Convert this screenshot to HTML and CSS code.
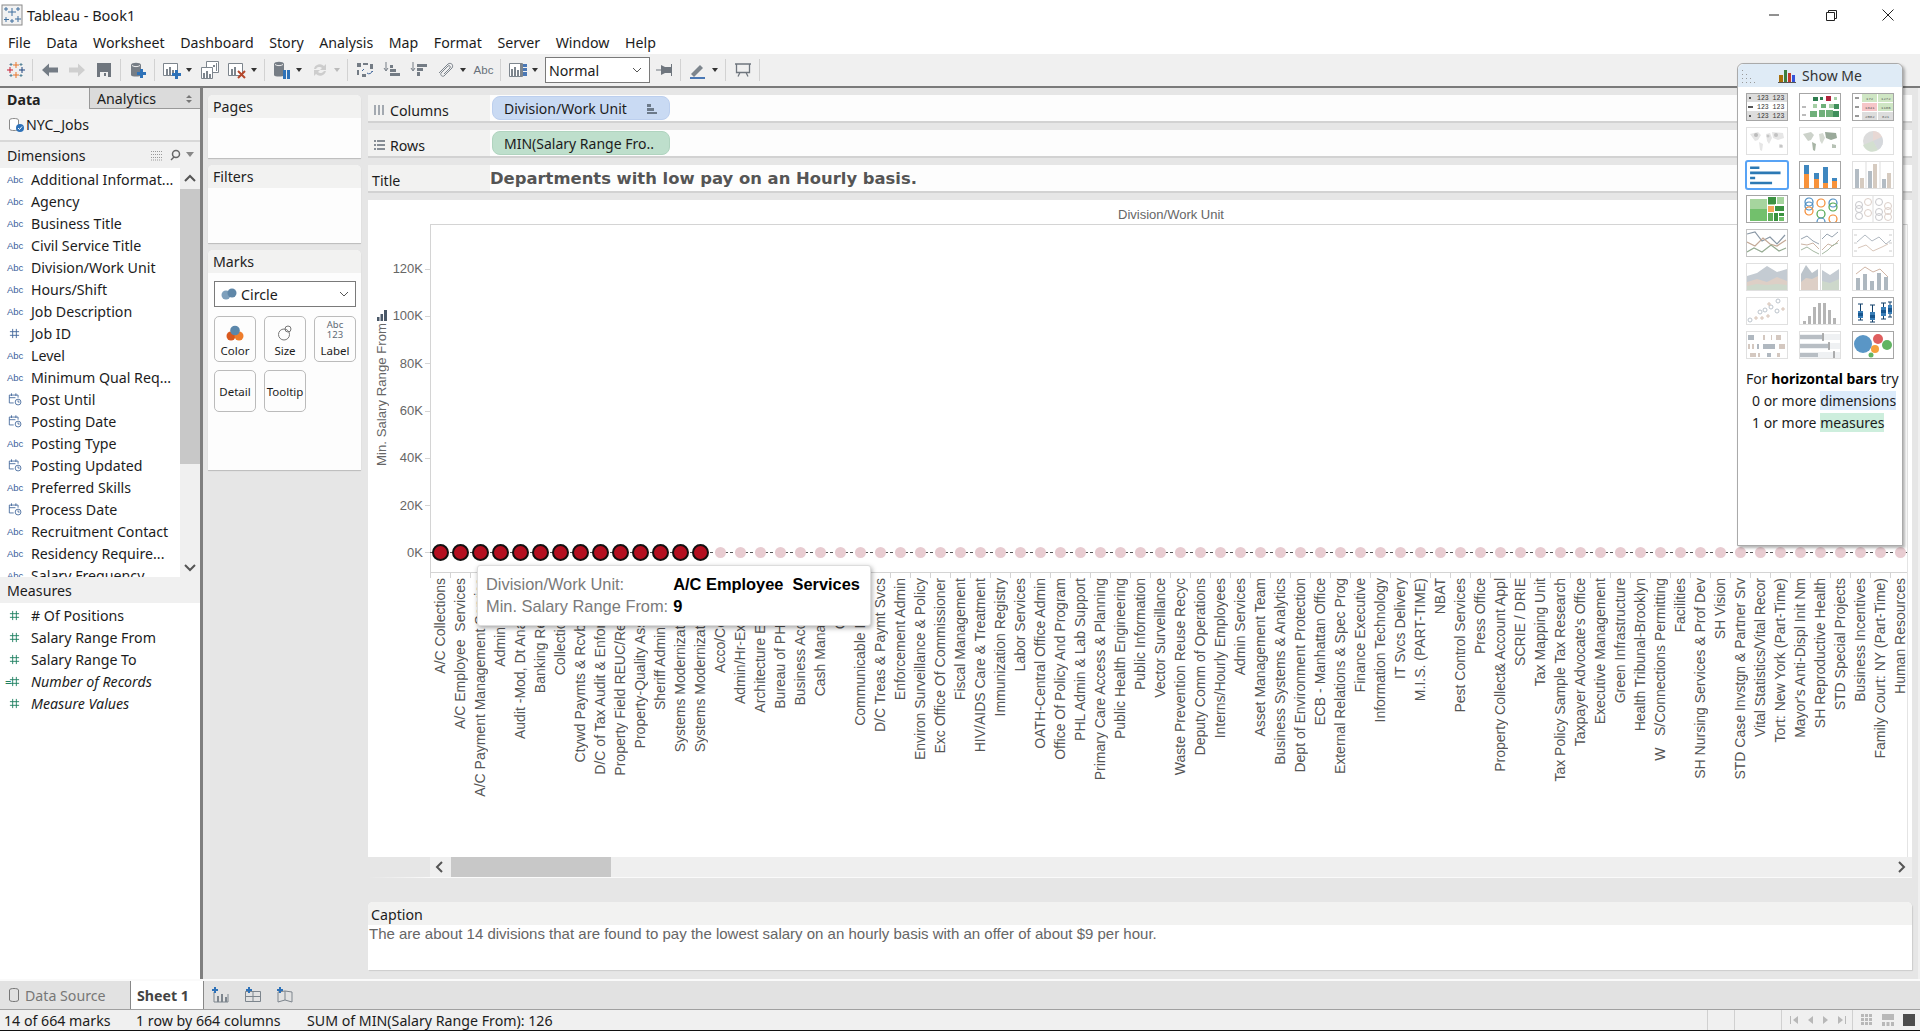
FILE: index.html
```html
<!DOCTYPE html>
<html lang="en">
<head>
    <meta charset="UTF-8">
    <title>Tableau - Book1</title>
    <link rel="stylesheet" href="styles.css">
</head>
<body>

<svg class="defs" width="0" height="0">
    <symbol id="i-caret" viewBox="0 0 14 14"><path d="M4 5h6L7 9z" fill="#333"/></symbol>
    <symbol id="i-caret-off" viewBox="0 0 14 14"><path d="M4 5h6L7 9z" fill="#bbb"/></symbol>
    <symbol id="i-date" viewBox="0 0 16 16"><g fill="none" stroke="#44689c"><path d="M1.500 3.500h10v3M1.500 3.500v9h5M4 1.500v3M9 1.500v3M1.500 6.500h7"/><circle cx="11.500" cy="11.500" r="3.300"/><path d="M11.500 9.500v2h1.800"/></g></symbol>
    <symbol id="i-hash-blue" viewBox="0 0 12 12"><path d="M4 1v10M8 1v10M1 4h10M1 8h10" stroke="#44689c" fill="none"/></symbol>
    <symbol id="i-hash" viewBox="0 0 12 12"><path d="M4 1v10M8 1v10M1 4h10M1 8h10" stroke="#1f8060" fill="none"/></symbol>
</svg>

<div class="app">

    <div class="titlebar">
        <svg class="app-icon" width="22" height="22" viewBox="0 0 22 22"><rect x="1" y="1" width="20" height="20" fill="#f2f2f2" stroke="#8a8a8a"/><path d="M11 4v8M7 8h8M5 3v4M3 5h4M17 3v4M15 5h4M5 13v5M3 15.500h5M17 12v6M14 15h6M11 15v4M9 17h4" stroke="#3f6f9e" fill="none"/></svg>
        <span class="app-name">Tableau - Book1</span>
        <div class="window-btns">
            <svg width="14" height="14" viewBox="0 0 14 14"><path d="M2 7h10" stroke="#222"/></svg>
            <svg width="14" height="14" viewBox="0 0 14 14"><path d="M2.500 4.500h8v8h-8zM4.500 4.500v-2h8v8h-2" fill="none" stroke="#222"/></svg>
            <svg width="14" height="14" viewBox="0 0 14 14"><path d="M1.500 1.500l11 11M12.500 1.500l-11 11" stroke="#222"/></svg>
        </div>
    </div>

    <div class="menubar">
        <span>File</span><span>Data</span><span>Worksheet</span><span>Dashboard</span><span>Story</span><span>Analysis</span><span>Map</span><span>Format</span><span>Server</span><span>Window</span><span>Help</span>
    </div>

    <div class="toolbar">
        <span class="tool"><svg width="20" height="20" viewBox="0 0 20 20"><path d="M10 2v6M7 5h6M10 12v6M7 15h6" stroke="#e8762c" fill="none"/><path d="M4 7v6M1 10h6" stroke="#c72035" fill="none"/><path d="M16 7v6M13 10h6" stroke="#1f457e" fill="none"/><path d="M5 3v3M3.500 4.500h3M15 3v3M13.500 4.500h3" stroke="#5b879b" fill="none"/><path d="M5 14v3M3.500 15.500h3M15 14v3M13.500 15.500h3" stroke="#59879b" fill="none"/></svg></span>
        <span class="sep"></span>
        <span class="tool"><svg width="18" height="18" viewBox="0 0 18 18"><path d="M1 9l7-6.500v4h9v5H8v4z" fill="#747c85"/></svg></span>
        <span class="tool"><svg width="18" height="18" viewBox="0 0 18 18"><path d="M17 9l-7-6.500v4H1v5h9v4z" fill="#cfcfcf"/></svg></span>
        <span class="tool"><svg width="18" height="18" viewBox="0 0 18 18"><path d="M2 2h14v14H2z" fill="#6f767e"/><path d="M5 11h8v5H5z" fill="#f0f0f0"/><path d="M9 12h2v3H9z" fill="#6f767e"/></svg></span>
        <span class="sep"></span>
        <span class="tool"><svg width="20" height="20" viewBox="0 0 20 20"><path d="M3 5c0-3 10-3 10 0v10c0 2-10 2-10 0z" fill="#767d85"/><path d="M4 5.500c2 1.500 6 1.500 8 0" stroke="#eee" fill="none"/><path d="M12 9h3v3h3v3h-3v3h-3v-3H9v-3h3z" fill="#2f72b8"/></svg></span>
        <span class="sep"></span>
        <span class="tool"><svg width="20" height="20" viewBox="0 0 20 20"><path d="M1.500 3.500h14v12h-14z" fill="#fff" stroke="#7d858d"/><path d="M4 9h2v6H4zM7 7h2v8H7zM10 10h2v5h-2z" fill="#7d858d"/><path d="M13 10h3v3h3v3h-3v3h-3v-3h-3v-3h3z" fill="#2f72b8"/></svg></span>
        <svg class="caret" viewBox="0 0 14 14"><use href="#i-caret"/></svg>
        <span class="tool"><svg width="20" height="20" viewBox="0 0 20 20"><path d="M6.500 1.500h12v11h-12z" fill="#fff" stroke="#7d858d"/><path d="M1.500 7.500h11v11h-11z" fill="#fff" stroke="#7d858d"/><path d="M3 13h2v5H3zM6 11h2v7H6zM9 14h2v4H9zM13 5h2v2h-2zM16 3h1v8h-1z" fill="#7d858d"/></svg></span>
        <span class="tool"><svg width="20" height="20" viewBox="0 0 20 20"><path d="M1.500 3.500h14v12h-14z" fill="#fff" stroke="#7d858d"/><path d="M4 9h2v6H4zM7 7h2v8H7z" fill="#7d858d"/><path d="M11 11l7 7M18 11l-7 7" stroke="#b5482c" stroke-width="2"/></svg></span>
        <svg class="caret" viewBox="0 0 14 14"><use href="#i-caret"/></svg>
        <span class="sep"></span>
        <span class="tool"><svg width="20" height="20" viewBox="0 0 20 20"><path d="M2 4c0-3 10-3 10 0v11c0 2-10 2-10 0z" fill="#767d85"/><path d="M3 4.500c2 1.500 6 1.500 8 0" stroke="#eee" fill="none"/><path d="M11 10h3v9h-3zM15 10h3v9h-3z" fill="#2f72b8"/></svg></span>
        <svg class="caret" viewBox="0 0 14 14"><use href="#i-caret"/></svg>
        <span class="tool"><svg width="20" height="20" viewBox="0 0 20 20"><path d="M4 9a6 6 0 0 1 10-3l2-2v6h-6l2-2a4 4 0 0 0-6 1zM16 11a6 6 0 0 1-10 3l-2 2v-6h6l-2 2a4 4 0 0 0 6-1z" fill="#cdcdcd"/></svg></span>
        <svg class="caret" viewBox="0 0 14 14"><use href="#i-caret-off"/></svg>
        <span class="sep"></span>
        <span class="tool"><svg width="18" height="18" viewBox="0 0 18 18"><path d="M1 2h4v4H1zM7 2h5v2H7zM1 9h2v5H1zM6 13h4v3H6zM14 3h3v5h-3z" fill="#747c85"/><path d="M11 12a3 3 0 0 0 5-2l1 1M8 8l-2 2" stroke="#44689c" fill="none"/></svg></span>
        <span class="tool"><svg width="18" height="18" viewBox="0 0 18 18"><path d="M3 1v8M1 7l2 3 2-3" stroke="#747c85" fill="none"/><path d="M7 4h3v3H7zM7 8h6v3H7zM7 12h10v3H7z" fill="#747c85"/></svg></span>
        <span class="tool"><svg width="18" height="18" viewBox="0 0 18 18"><path d="M3 1v8M1 7l2 3 2-3" stroke="#747c85" fill="none"/><path d="M7 3h10v3H7zM7 7h6v3H7zM7 11h3v4H7z" fill="#747c85"/></svg></span>
        <span class="tool"><svg width="18" height="18" viewBox="0 0 18 18"><path d="M2 12l9-9c3-2 6 1 4 4l-8 8c-2 1-4-1-3-3l7-7c1-1 3 0 2 2l-6 6" fill="none" stroke="#7d858d"/></svg></span>
        <svg class="caret" viewBox="0 0 14 14"><use href="#i-caret"/></svg>
        <span class="tool tool-abc">Abc</span>
        <span class="sep"></span>
        <span class="tool"><svg width="20" height="18" viewBox="0 0 20 18"><path d="M1.500 2.500h13v13h-13z" fill="#fff" stroke="#7d858d"/><path d="M3 8h2v7H3zM6 6h2v9H6zM9 9h2v6H9zM12 3h2v12h-2z" fill="#7d858d"/><path d="M15 3h4v3h-4zM15 7h4v3h-4zM15 11h4v4h-4z" fill="#4a78b5"/></svg></span>
        <svg class="caret" viewBox="0 0 14 14"><use href="#i-caret"/></svg>
        <div class="fit-select"><span>Normal</span><svg width="12" height="12" viewBox="0 0 12 12"><path d="M2 4l4 4 4-4" fill="none" stroke="#555"/></svg></div>
        <span class="tool"><svg width="18" height="14" viewBox="0 0 18 14"><path d="M1 7h6M16.500 1v12" stroke="#6f767e"/><path d="M6 2l4 2h6v6h-6l-4 2z" fill="#6f767e"/></svg></span>
        <span class="sep"></span>
        <span class="tool"><svg width="18" height="18" viewBox="0 0 18 18"><path d="M2 13l9-9 3 3-9 9z" fill="#7d858d"/><path d="M1 17h15" stroke="#4a78b5" stroke-width="2"/></svg></span>
        <svg class="caret" viewBox="0 0 14 14"><use href="#i-caret"/></svg>
        <span class="sep"></span>
        <span class="tool"><svg width="18" height="18" viewBox="0 0 18 18"><path d="M1 3h16M2.500 3.500v8h13v-8M6 11.500l-2 4M12 11.500l2 4" fill="none" stroke="#6f767e" stroke-width="1.300"/></svg></span>
        <span class="sep"></span>
    </div>

    <div class="workspace">

        <div class="left">
            <div class="tabs">
                <span class="tab tab-on">Data</span>
                <span class="tab tab-off">Analytics<svg width="8" height="10" viewBox="0 0 8 10"><path d="M1 4l3-3 3 3zM1 6l3 3 3-3z" fill="#777"/></svg></span>
            </div>
            <div class="source">
                <svg width="18" height="16" viewBox="0 0 18 16"><path d="M1.500 3c0-2 9-2 9 0v9c0 2-9 2-9 0z" fill="#fff" stroke="#8a8a8a"/><circle cx="12" cy="11" r="4" fill="#2f72b8"/><path d="M10 11l1.500 1.500 2.500-3" fill="none" stroke="#fff"/></svg>
                <span>NYC_Jobs</span>
            </div>
            <div class="list-head">
                <span>Dimensions</span>
                <svg width="46" height="12" viewBox="0 0 46 12"><path d="M1 2.500h12M1 5.500h12M1 8.500h12M1 11h12" stroke="#999" stroke-dasharray="1 1"/><circle cx="26" cy="5" r="3.500" fill="none" stroke="#666" stroke-width="1.500"/><path d="M24 8l-3 3" stroke="#666" stroke-width="1.500"/><path d="M36 3h8l-4 5z" fill="#888"/></svg>
            </div>
            <div class="dims">
                <div class="fields">
                    <div class="field"><span class="abc">Abc</span>Additional Informat...</div>
                    <div class="field"><span class="abc">Abc</span>Agency</div>
                    <div class="field"><span class="abc">Abc</span>Business Title</div>
                    <div class="field"><span class="abc">Abc</span>Civil Service Title</div>
                    <div class="field"><span class="abc">Abc</span>Division/Work Unit</div>
                    <div class="field"><span class="abc">Abc</span>Hours/Shift</div>
                    <div class="field"><span class="abc">Abc</span>Job Description</div>
                    <div class="field"><svg class="ftype" viewBox="0 0 12 12"><use href="#i-hash-blue"/></svg>Job ID</div>
                    <div class="field"><span class="abc">Abc</span>Level</div>
                    <div class="field"><span class="abc">Abc</span>Minimum Qual Req...</div>
                    <div class="field"><svg class="ftype ftype-date" viewBox="0 0 16 16"><use href="#i-date"/></svg>Post Until</div>
                    <div class="field"><svg class="ftype ftype-date" viewBox="0 0 16 16"><use href="#i-date"/></svg>Posting Date</div>
                    <div class="field"><span class="abc">Abc</span>Posting Type</div>
                    <div class="field"><svg class="ftype ftype-date" viewBox="0 0 16 16"><use href="#i-date"/></svg>Posting Updated</div>
                    <div class="field"><span class="abc">Abc</span>Preferred Skills</div>
                    <div class="field"><svg class="ftype ftype-date" viewBox="0 0 16 16"><use href="#i-date"/></svg>Process Date</div>
                    <div class="field"><span class="abc">Abc</span>Recruitment Contact</div>
                    <div class="field"><span class="abc">Abc</span>Residency Require...</div>
                    <div class="field"><span class="abc">Abc</span>Salary Frequency</div>
                </div>
                <div class="vscroll">
                    <svg width="14" height="21" viewBox="0 0 14 21"><path d="M2 13l5-5 5 5" fill="none" stroke="#555" stroke-width="2"/></svg>
                    <div class="vthumb"></div>
                    <svg class="vdown" width="14" height="14" viewBox="0 0 14 14"><path d="M2 5l5 5 5-5" fill="none" stroke="#555" stroke-width="2"/></svg>
                </div>
            </div>
            <div class="list-head list-head-m">Measures</div>
            <div class="measures">
                <div class="field"><svg class="ftype" viewBox="0 0 12 12"><use href="#i-hash"/></svg># Of Positions</div>
                <div class="field"><svg class="ftype" viewBox="0 0 12 12"><use href="#i-hash"/></svg>Salary Range From</div>
                <div class="field"><svg class="ftype" viewBox="0 0 12 12"><use href="#i-hash"/></svg>Salary Range To</div>
                <div class="field field-calc"><span class="calc">=</span><svg class="ftype" viewBox="0 0 12 12"><use href="#i-hash"/></svg>Number of Records</div>
                <div class="field field-calc"><svg class="ftype" viewBox="0 0 12 12"><use href="#i-hash"/></svg>Measure Values</div>
            </div>
        </div>

        <div class="cards">
            <div class="card card-pages"><div class="card-head">Pages</div></div>
            <div class="card card-filters"><div class="card-head">Filters</div></div>
            <div class="card card-marks">
                <div class="card-head">Marks</div>
                <div class="mark-type">
                    <svg width="16" height="12" viewBox="0 0 16 12"><circle cx="5" cy="7" r="4.500" fill="#7ea0bc"/><circle cx="11" cy="5" r="4.500" fill="#5f87a8"/></svg>
                    <span>Circle</span>
                    <svg class="chev" width="12" height="12" viewBox="0 0 12 12"><path d="M2 4l4 4 4-4" fill="none" stroke="#555"/></svg>
                </div>
                <div class="mark-btns">
                    <div class="mark-btn"><svg width="18" height="16" viewBox="0 0 18 16"><circle cx="5" cy="11" r="4.500" fill="#d9591f"/><circle cx="13" cy="11" r="4.500" fill="#ee7d2c"/><circle cx="9" cy="5.500" r="4.800" fill="#5b87ab"/></svg><span>Color</span></div>
                    <div class="mark-btn"><svg width="16" height="16" viewBox="0 0 16 16"><circle cx="7" cy="9.500" r="5.500" fill="none" stroke="#777"/><circle cx="11" cy="4" r="3" fill="none" stroke="#777"/></svg><span>Size</span></div>
                    <div class="mark-btn"><span class="abc123">Abc<br>123</span><span>Label</span></div>
                    <div class="mark-btn mark-btn-plain"><span>Detail</span></div>
                    <div class="mark-btn mark-btn-plain"><span>Tooltip</span></div>
                </div>
            </div>
        </div>

        <div class="main">
            <div class="shelf">
                <div class="shelf-label"><svg width="12" height="12" viewBox="0 0 12 12"><path d="M1 1h2v10H1zM5 1h2v10H5zM9 1h2v10H9z" fill="#a3a9b0"/></svg>Columns</div>
                <div class="pill pill-dim">Division/Work Unit<svg width="12" height="12" viewBox="0 0 12 12"><path d="M1 1h4v3H1zM1 5h7v3H1zM1 9h10v2H1z" fill="#6c7a8a"/></svg></div>
            </div>
            <div class="shelf">
                <div class="shelf-label"><svg width="12" height="12" viewBox="0 0 12 12"><path d="M1 1h2v2H1zM4 1h8v2H4zM1 5h2v2H1zM4 5h8v2H4zM1 9h2v2H1zM4 9h8v2H4z" fill="#868d95"/></svg>Rows</div>
                <div class="pill pill-mea">MIN(Salary Range Fro..</div>
            </div>
            <div class="shelf">
                <div class="shelf-label shelf-label-title">Title</div>
                <div class="sheet-title">Departments with low pay on an Hourly basis.</div>
            </div>

            <div class="view">
                <div class="view-head">Division/Work Unit</div>
                <div class="chart">
                    <div class="yaxis">
                        <div class="ytitle">
                            <svg width="12" height="11" viewBox="0 0 12 11"><path d="M1 7h2.500v4H1zM4.500 4H7v7H4.500zM8 0h3v11H8z" fill="#4a5868"/></svg>
                            <span>Min. Salary Range From</span>
                        </div>
                        <div class="yticks">
                            <div class="ytick">120K</div>
                            <div class="ytick">100K</div>
                            <div class="ytick">80K</div>
                            <div class="ytick">60K</div>
                            <div class="ytick">40K</div>
                            <div class="ytick">20K</div>
                            <div class="ytick">0K</div>
                        </div>
                    </div>
                    <div class="plot">
                        <div class="marks">
                            <i class="m on"></i><i class="m on"></i><i class="m on"></i><i class="m on"></i><i class="m on"></i><i class="m on"></i><i class="m on"></i><i class="m on"></i><i class="m on"></i><i class="m on"></i><i class="m on"></i><i class="m on"></i><i class="m on"></i><i class="m on"></i>
                            <i class="m"></i><i class="m"></i><i class="m"></i><i class="m"></i><i class="m"></i><i class="m"></i><i class="m"></i><i class="m"></i><i class="m"></i><i class="m"></i><i class="m"></i><i class="m"></i><i class="m"></i><i class="m"></i><i class="m"></i><i class="m"></i>
                            <i class="m"></i><i class="m"></i><i class="m"></i><i class="m"></i><i class="m"></i><i class="m"></i><i class="m"></i><i class="m"></i><i class="m"></i><i class="m"></i><i class="m"></i><i class="m"></i><i class="m"></i><i class="m"></i><i class="m"></i><i class="m"></i>
                            <i class="m"></i><i class="m"></i><i class="m"></i><i class="m"></i><i class="m"></i><i class="m"></i><i class="m"></i><i class="m"></i><i class="m"></i><i class="m"></i><i class="m"></i><i class="m"></i><i class="m"></i><i class="m"></i><i class="m"></i><i class="m"></i>
                            <i class="m"></i><i class="m"></i><i class="m"></i><i class="m"></i><i class="m"></i><i class="m"></i><i class="m"></i><i class="m"></i><i class="m"></i><i class="m"></i><i class="m"></i><i class="m"></i>
                        </div>
                    </div>
                </div>
                <div class="xticks"></div>
                <div class="cats">
                    <span>A/C Collections</span><span>A/C Employee  Services</span><span>A/C Payment Management Service</span><span>Administration</span><span>Audit -Mod, Dt Analysis IT</span><span>Banking Reconcils</span><span>Collections Unit</span><span>Ctywd Paymts &amp; Rcvbls Units</span><span>D/C of Tax Audit &amp; Enforcement</span><span>Property Field REUC/Revaluate</span><span>Property-Quality Assurance</span><span>Sheriff Administration</span><span>Systems Modernization Unit</span><span>Systems Modernization Unit</span><span>Acco/Contracts</span><span>Admin/Hr-Exempted</span><span>Architecture Engineer</span><span>Bureau of PH Library</span><span>Business Access Ctr</span><span>Cash Management</span><span>Chemist</span><span>Communicable Disease</span><span>D/C Treas &amp; Paymt Svcs</span><span>Enforcement Admin</span><span>Environ Surveillance &amp; Policy</span><span>Exc Office Of Commissioner</span><span>Fiscal Management</span><span>HIV/AIDS Care &amp; Treatment</span><span>Immunization Registry</span><span>Labor Services</span><span>OATH-Central Office Admin</span><span>Office Of Policy And Program</span><span>PHL Admin &amp; Lab Support</span><span>Primary Care Access &amp; Planning</span><span>Public Health Engineering</span><span>Public Information</span><span>Vector Surveillance</span><span>Waste Prevention Reuse Recyc</span><span>Deputy Comm of Operations</span><span>Interns/Hourly Employees</span><span>Admin Services</span><span>Asset Management Team</span><span>Business Systems &amp; Analytics</span><span>Dept of Environment Protection</span><span>ECB - Manhattan Office</span><span>External Relations &amp; Spec Prog</span><span>Finance Executive</span><span>Information Technology</span><span>IT Svcs Delivery</span><span>M.I.S. (PART-TIME)</span><span>NBAT</span><span>Pest Control Services</span><span>Press Office</span><span>Property Collect&amp; Account Appl</span><span>SCRIE / DRIE</span><span>Tax Mapping Unit</span><span>Tax Policy Sample Tax Research</span><span>Taxpayer Advocate's Office</span><span>Executive Management</span><span>Green Infrastructure</span><span>Health Tribunal-Brooklyn</span><span>W   S/Connections Permitting</span><span>Facilities</span><span>SH Nursing Services &amp; Prof Dev</span><span>SH Vision</span><span>STD Case Invstgn &amp; Partner Srv</span><span>Vital Statistics/Vital Recor</span><span>Tort: New York (Part-Time)</span><span>Mayor's Anti-Displ Init Nm</span><span>SH Reproductive Health</span><span>STD Special Projects</span><span>Business Incentives</span><span>Family Court: NY (Part-Time)</span><span>Human Resources</span>
                </div>
                <div class="hscroll">
                    <svg width="10" height="14" viewBox="0 0 10 14"><path d="M7 2L2 7l5 5" fill="none" stroke="#555" stroke-width="2"/></svg>
                    <div class="hthumb"></div>
                    <svg class="hnext" width="10" height="14" viewBox="0 0 10 14"><path d="M3 2l5 5-5 5" fill="none" stroke="#555" stroke-width="2"/></svg>
                </div>
                <div class="tooltip">
                    <span class="tip-k">Division/Work Unit:</span><span class="tip-v">A/C Employee  Services</span>
                    <span class="tip-k">Min. Salary Range From:</span><span class="tip-v">9</span>
                </div>
            </div>

            <div class="caption">
                <div class="caption-head">Caption</div>
                <div class="caption-text">The are about 14 divisions that are found to pay the lowest salary on an hourly basis with an offer of about $9 per hour.</div>
            </div>
        </div>
    </div>

    <div class="tabbar">
        <span class="ds-tab"><svg width="12" height="16" viewBox="0 0 12 16"><path d="M1.500 3c0-2 9-2 9 0v10c0 2-9 2-9 0z" fill="none" stroke="#777"/></svg>Data Source</span>
        <span class="sheet-tab">Sheet 1</span>
        <div class="new-tabs">
            <svg width="18" height="16" viewBox="0 0 18 16"><path d="M2 5v10h14V7" fill="none" stroke="#7d858d"/><path d="M5 9h2v6H5zM9 7h2v8H9zM13 10h2v5h-2z" fill="#7d858d"/><path d="M3 0v6M0 3h6" stroke="#2f72b8" stroke-width="2"/></svg>
            <svg width="18" height="16" viewBox="0 0 18 16"><path d="M1.500 4.500h15v10h-15zM1.500 9.500h15M9 4.500v10" fill="none" stroke="#7d858d"/><path d="M5 0v6M2 3h6" stroke="#2f72b8" stroke-width="2"/></svg>
            <svg width="18" height="16" viewBox="0 0 18 16"><path d="M2 5v10l7-2 7 2V5l-7-1zM9 4v9" fill="none" stroke="#7d858d"/><path d="M4 0v6M1 3h6" stroke="#2f72b8" stroke-width="2"/></svg>
        </div>
    </div>

    <div class="statusbar">
        <span class="st-marks">14 of 664 marks</span>
        <span class="st-dims">1 row by 664 columns</span>
        <span class="st-sum">SUM of MIN(Salary Range From): 126</span>
        <div class="st-right">
            <span class="st-cell"></span>
            <span class="st-cell st-cell-wide"></span>
            <div class="st-nav">
                <svg width="10" height="10" viewBox="0 0 10 10"><path d="M1 1h1v8H1zM9 1v8L4 5z" fill="#b8b8b8"/></svg>
                <svg width="10" height="10" viewBox="0 0 10 10"><path d="M8 1v8L3 5z" fill="#b8b8b8"/></svg>
                <svg width="10" height="10" viewBox="0 0 10 10"><path d="M2 1v8l5-4z" fill="#b8b8b8"/></svg>
                <svg width="10" height="10" viewBox="0 0 10 10"><path d="M8 1h1v8H8zM1 1v8l5-4z" fill="#b8b8b8"/></svg>
            </div>
            <div class="st-views">
                <svg width="12" height="12" viewBox="0 0 12 12"><path d="M0 0h3v3H0zM4 0h3v3H4zM8 0h3v3H8zM0 4h3v3H0zM4 4h3v3H4zM8 4h3v3H8zM0 8h3v3H0zM4 8h3v3H4zM8 8h3v3H8z" fill="#b8b8b8"/></svg>
                <svg width="12" height="12" viewBox="0 0 12 12"><path d="M0 0h12v6H0zM0 8h3v4H0zM4.500 8h3v4h-3zM9 8h3v4H9z" fill="#b8b8b8"/></svg>
                <svg width="12" height="12" viewBox="0 0 12 12"><path d="M0 0h12v12H0z" fill="#4c4c4c"/></svg>
            </div>
        </div>
    </div>

    <!-- floating show me panel -->
    <div class="showme">
        <div class="showme-head">
            <svg class="showme-grip" width="16" height="16" viewBox="0 0 16 16"><path d="M1 1h1v1H1zM1 5h1v1H1zM5 5h1v1H5zM1 9h1v1H1zM5 9h1v1H5zM9 9h1v1H9zM1 13h1v1H1zM5 13h1v1H5zM9 13h1v1H9zM13 13h1v1h-1z" fill="#999"/></svg>
            <svg width="18" height="14" viewBox="0 0 18 14"><path d="M1 6h4v7H1z" fill="#a8700a"/><path d="M6 1h3v12H6z" fill="#3f7f3f"/><path d="M10 4h3v9h-3z" fill="#c0392b"/><path d="M14 6h3v7h-3z" fill="#3552d8"/><path d="M0 13.500h18" stroke="#555"/></svg>
            <span>Show Me</span>
        </div>
        <div class="thumbs">
            <svg class="thumb" viewBox="0 0 40 26"><path d="M0 0h40v8H0zM0 17h40v9H0z" fill="#ddd"/><path d="M2 3h2v2H2zM1 12h5v2H1zM2 21h2v2H2z" fill="#555"/><text class="tx" x="10" y="6">123 123</text><text class="tx" x="10" y="15">123 123</text><text class="tx" x="10" y="24">123 123</text></svg>
            <svg class="thumb" viewBox="0 0 40 26"><path d="M13 3h5v4h-5zM20 3h3v3h-3z" fill="#2e7d4f"/><path d="M26 2h5v5h-5z" fill="#b0243c"/><path d="M34 3h3v3h-3zM13 10h4v4h-4zM29 10h5v4h-5z" fill="#a6cfa6"/><path d="M21 10h5v4h-5zM26 16h7v7h-7z" fill="#6fb07a"/><path d="M34 10h5v5h-5zM33 17h6v6h-6z" fill="#3f8f5b"/><path d="M10 17h7v6h-7zM19 16h6v7h-6z" fill="#6fb07a"/><path d="M2 12h4v2H2zM2 20h4v2H2z" fill="#bbb"/></svg>
            <svg class="thumb" viewBox="0 0 40 26"><path d="M9 0h15v8H9zM25 0h15v8H25zM25 9h15v8H25z" fill="#cfe6c4"/><path d="M9 9h15v8H9z" fill="#f6c6c8"/><path d="M9 18h15v8H9zM25 18h15v8H25z" fill="#ddd"/><path d="M2 3h4v2H2zM2 12h4v2H2zM2 21h4v2H2z" fill="#999"/><text class="tx-s" x="13" y="6">172</text><text class="tx-s" x="28" y="6">1272</text><text class="tx-s" x="12" y="15">1841</text><text class="tx-s" x="28" y="15">1186</text><text class="tx-s" x="12" y="24">2082</text><text class="tx-s" x="29" y="24">821</text></svg>

            <svg class="thumb off" viewBox="0 0 40 26"><path d="M3 6l8-2 3 3-3 5-3 1zM12 14l4 2-1 7-2-1zM19 6l4-1 2 5-3 6-2-3zM25 4l11 1 1 5-6 2-5-2zM32 16l4 1 0 3-4 0z" fill="#e6e6e6"/><circle cx="9" cy="7" r="2" fill="#bbb"/><circle cx="21" cy="8" r="1.500" fill="#c6c6c6"/><circle cx="29" cy="7" r="2" fill="#c2c2c2"/><circle cx="34" cy="18" r="1.500" fill="#c6c6c6"/></svg>
            <svg class="thumb off" viewBox="0 0 40 26"><path d="M3 6l8-2 3 3-3 5-3 1z" fill="#ccd2ca"/><path d="M12 14l4 2-1 7-2-1z" fill="#a8b5a6"/><path d="M19 6l4-1 2 5-3 6-2-3z" fill="#d6dbd3"/><path d="M25 4l11 1 1 5-6 2-5-2z" fill="#9aa99a"/><path d="M32 16l4 1 0 3-4 0z" fill="#b7c2b5"/></svg>
            <svg class="thumb off" viewBox="0 0 40 26"><circle cx="20" cy="13" r="10" fill="#dcdcdc"/><path d="M20 13V3a10 10 0 0 1 9 6z" fill="#e8d8d4"/><path d="M20 13l9-4a10 10 0 0 1-4 13z" fill="#d5d8dc"/><path d="M20 13l5 9a10 10 0 0 1-15-5z" fill="#d3dfd0"/></svg>

            <div class="thumb-on"><svg viewBox="0 0 40 26"><path d="M0 3h11v3H0zM0 9h36v3H0zM0 15h6v3H0zM0 21h26v3H0z" fill="#2c79b4"/></svg></div>
            <svg class="thumb" viewBox="0 0 40 26"><path d="M4 3h5v12H4zM14 11h5v6h-5zM23 5h5v17h-5zM32 16h5v3h-5z" fill="#3f87bf"/><path d="M4 12h5v14H4zM14 17h5v9h-5zM23 21h5v5h-5zM32 19h5v7h-5z" fill="#f8923a"/></svg>
            <svg class="thumb off" viewBox="0 0 40 26"><path d="M2 7h4v19H2zM15 9h4v17h-4zM29 17h4v9h-4z" fill="#b3bcc4"/><path d="M7 16h4v10H7zM20 2h4v24h-4zM34 11h4v15h-4zM16 20h0" fill="#d6cbc0"/><path d="M13 0v26M27 0v26" stroke="#ddd"/></svg>

            <svg class="thumb" viewBox="0 0 40 26"><path d="M3 3h17v10H3zM21 3h7v6h-7z" fill="#a6d59e"/><path d="M21 1h8v7h-8z" fill="#3b9241"/><path d="M30 1h7v7h-7z" fill="#a6d59e"/><path d="M3 13h17v12H3z" fill="#72c06c"/><path d="M21 10h6v6h-6z" fill="#f5a85c"/><path d="M28 10h9v5h-9zM27 17h4v8h-4zM32 17h5v3h-5z" fill="#3b9241"/><path d="M21 17h5v8h-5z" fill="#5fae5a"/><path d="M32 21h5v4h-5z" fill="#72c06c"/></svg>
            <svg class="thumb" viewBox="0 0 40 26"><g fill="none" stroke-width="1.200"><circle cx="9" cy="6" r="4" stroke="#4b8cc2"/><circle cx="9" cy="10" r="4" stroke="#4b8cc2"/><circle cx="9" cy="15" r="4" stroke="#f48b34"/><circle cx="21" cy="7" r="4" stroke="#f48b34"/><circle cx="21" cy="18" r="4" stroke="#4da54c"/><circle cx="21" cy="26" r="4" stroke="#4b8cc2"/><circle cx="33" cy="7" r="4" stroke="#4b8cc2"/><circle cx="33" cy="11" r="4" stroke="#4da54c"/><circle cx="33" cy="23" r="4" stroke="#f48b34"/></g></svg>
            <svg class="thumb off" viewBox="0 0 40 26"><g fill="none" stroke="#c8c8cc"><circle cx="6" cy="9" r="3.500"/><circle cx="6" cy="13" r="3.500"/><circle cx="6" cy="20" r="3.500"/><circle cx="26" cy="6" r="3.500"/><circle cx="26" cy="16" r="3.500"/><circle cx="26" cy="21" r="3.500"/></g><g fill="none" stroke="#dccfc8"><circle cx="15" cy="6" r="3.500"/><circle cx="15" cy="17" r="3.500"/><circle cx="35" cy="10" r="3.500"/><circle cx="35" cy="15" r="3.500"/><circle cx="35" cy="21" r="3.500"/></g><path d="M20 0v26" stroke="#ddd"/></svg>

            <svg class="thumb mid" viewBox="0 0 40 26"><g fill="none" stroke-width="1.200"><path d="M0 4l8-2 7 9 8-4 7 7 8-9" stroke="#8a98a6"/><path d="M0 12l8 4 8-8 7 6 7 2 9-6" stroke="#c4a996"/><path d="M0 22l7-4 8 4 9-7 8 6 7-3" stroke="#95ab92"/></g></svg>
            <svg class="thumb off" viewBox="0 0 40 26"><g fill="none"><path d="M1 9l6-3 6 5 6 3" stroke="#98a4b0"/><path d="M1 14l6 1 6-2 6 6" stroke="#ccb5a5"/><path d="M1 20l6-3 6 4 6 3" stroke="#a5b8a2"/><path d="M22 9l5-5 5 3 6-5" stroke="#98a4b0"/><path d="M22 20l6-6 5 2 6-6" stroke="#ccb5a5"/><path d="M22 24l6-4 5-5 5-2" stroke="#a5b8a2"/><path d="M20.500 0v26" stroke="#ddd"/></g></svg>
            <svg class="thumb off" viewBox="0 0 40 26"><g fill="none"><path d="M4 12l8-7 7 6 7-4 7 7 5-4" stroke="#b3bac2"/><path d="M5 18l8-3 7 6 9-4 6-3" stroke="#d8c6ba"/><path d="M1 5h3M1 13h3M1 21h3M36 5h3M36 13h3M36 21h3" stroke="#ccc"/></g></svg>

            <svg class="thumb off" viewBox="0 0 40 26"><path d="M0 12l10-3 10-7 10 6 10-3v21H0z" fill="#c4cbd2"/><path d="M0 18l10-3 10 3 10-5 10 4v9H0z" fill="#ddcfc6"/><path d="M0 22l10-2 10 1 10-1 10 1v5H0z" fill="#cdd8cb"/></svg>
            <svg class="thumb off" viewBox="0 0 40 26"><path d="M1 10l5-9 6 8 6-4v21H1z" fill="#bcc4cb"/><path d="M1 18l5-4 6 1 6-3v14H1z" fill="#ddcfc6"/><path d="M22 6l8 5 9-6v21H22z" fill="#c4cbd2"/><path d="M22 17l8 2 9-4v11H22z" fill="#cdd8cb"/><path d="M20.500 0v26" stroke="#ddd"/></svg>
            <svg class="thumb off" viewBox="0 0 40 26"><path d="M3 14h4v12H3zM10 10h4v16h-4zM17 17h4v9h-4zM24 9h4v17h-4zM31 13h4v13h-4z" fill="#aeb8c0"/><path d="M3 10l9-7 8 5 7-3 8 8" fill="none" stroke="#d0b5a5"/></svg>

            <svg class="thumb off" viewBox="0 0 40 26"><g fill="none" stroke="#bcc4cc"><circle cx="3" cy="22" r="2"/><circle cx="13" cy="14" r="2"/><circle cx="18" cy="12" r="2"/><circle cx="24" cy="9" r="2"/><circle cx="30" cy="13" r="2"/><circle cx="31" cy="3" r="2"/></g><path d="M9 18v4M7 20h4M15 18v4M13 20h4M21 16v4M19 18h4M22 4v4M20 6h4M36 9v4M34 11h4" stroke="#d6c2b5"/></svg>
            <svg class="thumb off" viewBox="0 0 40 26"><path d="M3 23h3v3H3zM8 18h3v8H8zM13 9h3v17h-3zM18 5h3v21h-3zM23 5h3v21h-3zM28 12h3v14h-3zM33 20h3v6h-3z" fill="#b5b5b5"/></svg>
            <svg class="thumb" viewBox="0 0 40 26"><path d="M5 6h5M7.500 6v16M5 22h5M17 7h5M19.500 7v17M17 24h5M28 5h5M30.500 5v16M28 21h5M35 4h4M37 4v15M35 19h4" stroke="#12416b" fill="none"/><path d="M5 13h5v7H5zM17 14h5v8h-5zM28 9h5v9h-5zM35 7h4v9h-4z" fill="#3a7fb8"/><path d="M5 15h5v3H5zM17 17h5v3h-5zM28 12h5v3h-5zM35 10h4v4h-4z" fill="#17568f"/></svg>

            <svg class="thumb off" viewBox="0 0 40 26"><path d="M1 3h6v5H1zM16 3h2v5h-2zM24 3h1v5h-1zM29 3h5v5h-5zM1 12h2v5H1zM5 12h2v5H5zM10 12h2v5h-2zM16 12h12v5H16zM32 12h6v5h-6zM3 21h6v4H3zM11 21h2v4h-2zM20 21h4v4h-4zM30 21h3v4h-3z" fill="#d4c8c0"/><path d="M1 3h6v5H1zM16 12h12v5H16zM20 21h4v4h-4zM10 12h2v5h-2z" fill="#b0b8c0"/></svg>
            <svg class="thumb off" viewBox="0 0 40 26"><path d="M0 2h40v6H0zM0 11h40v6H0zM0 20h40v6H0z" fill="#eff1f3"/><path d="M0 3h22v4H0zM0 12h28v4H0zM0 21h18v4H0z" fill="#b8bec4"/><path d="M23 1v8M29 10v8M34 19v7" stroke="#666"/></svg>
            <svg class="thumb" viewBox="0 0 40 26"><circle cx="10" cy="12" r="9" fill="#5a96c6"/><circle cx="25" cy="7" r="5" fill="#df5f5f"/><circle cx="22" cy="17" r="4" fill="#f6a03c"/><circle cx="34" cy="13" r="5" fill="#62b462"/><circle cx="18" cy="23" r="2.500" fill="#62b462"/></svg>
        </div>
        <div class="hint">
            <div>For <b>horizontal bars</b> try</div>
            <div class="hint-line">0 or more <span class="hint-dim">dimensions</span></div>
            <div class="hint-line">1 or more <span class="hint-mea">measures</span></div>
        </div>
    </div>

</div>

</body>
</html>
```

FILE: styles.css
```css
* { box-sizing: border-box; }
html, body { margin: 0; height: 100%; overflow: hidden; }
body { font-family: "Noto Sans", sans-serif; font-size: 14.2px; color: #1c1c1c; background: #fff; }
.defs { position: absolute; }
.app { position: relative; display: flex; flex-direction: column; height: 1031px; }

/* window chrome */
.titlebar { display: flex; align-items: center; height: 30px; padding-left: 1px; font-size: 14.5px; }
.app-name { margin-left: 4px; }
.window-btns { margin-left: auto; display: flex; gap: 43px; padding-right: 25px; }
.menubar { display: flex; align-items: center; gap: 15.500px; height: 24px; padding-left: 8px; font-size: 14.2px; }
.toolbar { display: flex; align-items: center; height: 34px; padding-left: 2px; background: #f0f0f0; border-bottom: 2px solid #7a7a7a; }
.tool { display: flex; align-items: center; justify-content: center; width: 27px; flex: none; }
.tool-abc { font-family: "Liberation Sans", sans-serif; font-size: 11.500px; color: #68707a; }
.sep { width: 1px; height: 22px; margin: 0 3px; background: #d2d2d2; flex: none; }
.caret { width: 14px; height: 14px; margin-left: -3px; flex: none; }
.fit-select { display: flex; align-items: center; justify-content: space-between; width: 105px; height: 26px; margin-left: 3px; padding: 0 6px 0 3px; background: #fff; border: 1px solid #7a7a7a; font-size: 14.2px; }

.workspace { display: flex; flex: 1; min-height: 0; }

/* data pane */
.left { display: flex; flex-direction: column; width: 203px; background: #fff; border-right: 3px solid #7f7f7f; }
.tabs { display: flex; height: 21px; background: #f0f0f0; }
.tab { display: flex; align-items: center; padding-left: 7px; padding-top: 1px; }
.tab-on { width: 89px; font-weight: 700; color: #222; }
.tab-off { width: 111px; background: #dbdbdb; border-left: 1px solid #999; border-bottom: 1px solid #999; justify-content: space-between; padding-right: 7px; }
.source { display: flex; align-items: center; height: 33px; padding-left: 8px; background: #f3f3f3; border-bottom: 2px solid #d8d8d8; }
.list-head { display: flex; align-items: center; justify-content: space-between; flex: none; height: 26px; padding: 0 4px 0 7px; background: #f0f0f0; }
.dims { display: flex; height: 409px; }
.fields { width: 180px; overflow: hidden; background: #fff; }
.field { display: flex; align-items: center; height: 22px; white-space: nowrap; }
.abc { width: 31px; padding-left: 7px; flex: none; font-family: "Liberation Sans", sans-serif; font-size: 9.500px; color: #3c619c; }
.ftype { width: 11px; height: 11px; margin: 0 11px 0 9px; flex: none; }
.ftype-date { width: 14px; height: 14px; margin: 0 9px 0 8px; }
.vscroll { display: flex; flex-direction: column; align-items: center; width: 20px; background: #f0f0f0; }
.vthumb { width: 20px; height: 275px; background: #c8c8c8; }
.vdown { margin-top: 96px; }
.measures { padding-top: 1px; }
.field-calc { font-style: italic; }
.calc { width: 0; margin-left: 5px; margin-right: -5px; color: #1f8060; font-style: normal; font-size: 11px; }

/* pages, filters, marks */
.cards { display: flex; flex-direction: column; gap: 7px; width: 165px; padding: 7px 7px 0 5px; background: #e6e6e6; flex: none; }
.card { background: #fdfdfd; border-radius: 5px 5px 0 0; box-shadow: 0 1px 1px #bbb; }
.card-head { height: 23px; padding: 2px 5px 0; background: #f2f2f1; border-radius: 5px 5px 0 0; color: #222; }
.card-pages { height: 63px; }
.card-filters { height: 78px; }
.card-marks { height: 220px; }
.mark-type { display: flex; align-items: center; gap: 4px; height: 26px; margin: 8px 5px 0 6px; padding: 0 5px 0 6px; background: #fff; border: 1px solid #7a7a7a; }
.chev { margin-left: auto; }
.mark-btns { display: grid; grid-template-columns: repeat(3, 42px); grid-template-rows: 46px 42px; gap: 8px; margin: 9px 0 0 6px; }
.mark-btn { display: flex; flex-direction: column; align-items: center; justify-content: flex-end; gap: 2px; padding-bottom: 3px; border: 1px solid #bbb; border-radius: 5px; font-size: 11.500px; background: #fdfdfd; }
.mark-btn-plain { justify-content: center; padding-bottom: 0; }
.abc123 { font-size: 9.500px; line-height: 10px; text-align: center; color: #5f6a75; padding-bottom: 1px; }

/* shelves */
.main { display: flex; flex-direction: column; gap: 7px; flex: 1; min-width: 0; padding: 7px 6px 9px 0; background: #e6e6e6; border-right: 2px solid #f0f0f0; }
.shelf { display: flex; align-items: center; height: 28px; flex: none; background: #fdfdfd; border-bottom: 2px solid #d2d2d2; }
.shelf-label { display: flex; align-items: center; gap: 5px; width: 122px; height: 100%; padding-left: 5px; padding-top: 4px; background: #f2f2f1; flex: none; }
.shelf-label-title { padding-left: 4px; padding-top: 5px; }
.pill { display: flex; align-items: center; justify-content: space-between; width: 178px; height: 24px; margin-left: 2px; padding: 1px 11px 0; border-radius: 8px; font-size: 14px; }
.pill-dim { background: #c9daf3; border: 1px solid #bccfee; }
.pill-mea { background: #bedfcc; border: 1px solid #b0d4bf; }
.sheet-title { font-family: "DejaVu Sans", sans-serif; font-weight: 700; font-size: 16.400px; color: #555; white-space: nowrap; }

/* chart */
.view { position: relative; display: flex; flex-direction: column; flex: 1; min-height: 0; background: #fff; }
.view::after { content: ""; position: absolute; right: 4px; top: 24px; bottom: 21px; width: 1px; background: #e4e4e4; }
.view-head { height: 24px; padding: 7px 0 0 62px; text-align: center; font-family: "Liberation Sans", sans-serif; font-size: 13px; color: #666; }
.chart { display: flex; height: 349px; flex: none; }
.yaxis { display: flex; width: 62px; flex: none; font-family: "Liberation Sans", sans-serif; font-size: 13px; color: #666; }
.ytitle { display: flex; flex-direction: column; align-items: center; width: 24px; padding-top: 86px; margin-left: 3px; gap: 2px; font-size: 13.200px; }
.ytitle span { writing-mode: vertical-rl; transform: rotate(180deg); white-space: nowrap; }
.yticks { flex: 1; padding-top: 21px; }
.ytick { position: relative; display: flex; align-items: center; justify-content: flex-end; height: 47.300px; padding-right: 7px; }
.ytick::after { content: ""; position: absolute; right: 0; top: 50%; width: 5px; height: 1px; background: #d4d4d4; }
.plot { display: flex; flex-direction: column; justify-content: flex-end; flex: 1; min-width: 0; padding-bottom: 13px; border-left: 1px solid #d4d4d4; border-top: 1px solid #d4d4d4; border-bottom: 1px solid #d4d4d4; margin-right: 4px; }
.marks { display: flex; height: 14px; margin-left: -1px; background: repeating-linear-gradient(90deg, #555 0 3px, transparent 3px 5px) center / 100% 1px no-repeat; }
.m { display: flex; align-items: center; width: 20px; height: 14px; flex: none; justify-content: center; }
.m::before { content: ""; width: 11px; height: 11px; border-radius: 50%; background: #e8ccd1; }
.m.on::before { width: 13px; height: 13px; background: #b40f20; border: 2px solid #111; }
.xticks { height: 5px; margin: 0 4px 0 62px; flex: none; background: repeating-linear-gradient(90deg, #d4d4d4 0 1px, transparent 1px 20px); }
.cats { display: flex; flex: 1; min-height: 0; margin-left: 62px; overflow: hidden; font-family: "Liberation Sans", sans-serif; font-size: 14px; color: #555; }
.cats span { display: block; width: 20px; height: fit-content; flex: none; line-height: 20px; writing-mode: vertical-rl; transform: rotate(180deg); white-space: pre; }
.hscroll { display: flex; align-items: center; height: 21px; flex: none; padding: 0 6px 0 5px; background: #efefef; border-left: 62px solid #e6e6e6; border-bottom: 1px solid #fafafa; }
.hthumb { width: 160px; height: 20px; margin-left: 6px; background: #c8c8c8; }
.hnext { margin-left: auto; }
.tooltip { position: absolute; left: 109px; top: 365px; display: grid; grid-template-columns: max-content max-content; column-gap: 5px; align-content: center; row-gap: 2px; width: 394px; height: 61px; padding: 0 8px 2px; background: #fff; border: 1px solid #ddd; border-radius: 3px; box-shadow: 1px 2px 5px rgba(0, 0, 0, 0.35); font-family: "Liberation Sans", sans-serif; font-size: 16.400px; line-height: 20px; }
.tip-k { color: #7a7a7a; }
.tip-v { color: #000; font-weight: 700; white-space: pre; }

.caption { flex: none; height: 68px; margin-top: 17px; background: #fff; border-radius: 5px 5px 0 0; box-shadow: 1px 1px 1px #ccc; }
.caption-head { height: 23px; padding: 3px 3px 0; background: #f2f2f1; border-radius: 5px 5px 0 0; }
.caption-text { padding: 0 1px; font-family: "Liberation Sans", sans-serif; font-size: 15px; color: #666; }

/* bottom bars */
.tabbar { display: flex; align-items: stretch; height: 30px; flex: none; background: #e2e2e2; border-top: 2px solid #fafafa; }
.ds-tab { display: flex; align-items: center; gap: 5px; width: 130px; padding-left: 8px; color: #777; }
.sheet-tab { display: flex; align-items: center; width: 74px; padding-left: 6px; background: #fff; border-left: 1px solid #888; border-right: 1px solid #888; font-weight: 700; color: #444; }
.new-tabs { display: flex; align-items: center; gap: 14px; padding-left: 8px; }
.statusbar { display: flex; align-items: center; height: 22px; flex: none; background: #f0f0f0; border-top: 1px solid #a0a0a0; border-bottom: 1px solid #111; white-space: nowrap; }
.st-marks { width: 136px; padding-left: 4px; }
.st-dims { width: 171px; }
.st-right { display: flex; align-items: stretch; height: 100%; margin-left: auto; }
.st-cell { width: 27px; border-left: 1px solid #d0d0d0; }
.st-cell-wide { width: 47px; }
.st-nav { display: flex; align-items: center; gap: 6px; width: 71px; padding-left: 7px; border-left: 1px solid #d0d0d0; }
.st-views { display: flex; align-items: center; gap: 9px; width: 68px; padding-left: 8px; border-left: 1px solid #d0d0d0; }

/* show me */
.showme { position: absolute; left: 1737px; top: 63px; width: 166px; height: 483px; background: #fff; border: 1px solid #aaa; border-radius: 6px 6px 0 0; box-shadow: 2px 2px 3px rgba(0, 0, 0, 0.3); }
.showme-head { position: relative; display: flex; align-items: center; justify-content: center; gap: 6px; height: 23px; background: #dfebf6; border-radius: 6px 6px 0 0; font-size: 14px; color: #333; }
.showme-grip { position: absolute; left: 3px; top: 5px; }
.thumbs { display: grid; grid-template-columns: repeat(3, 42px); grid-auto-rows: 28px; column-gap: 11px; row-gap: 6px; padding: 6px 0 0 8px; }
.thumb { display: block; width: 42px; height: 28px; background: #fff; border: 1px solid #a6a6a6; }
.thumb.off { border-color: #e0e0e0; }
.thumb.mid { border-color: #c4c4c4; }
.thumb-on { width: 44px; height: 30px; margin: -1px; padding: 2px; background: #fff; border: 2px solid #58a3f5; border-radius: 3px; }
.thumb-on svg { display: block; width: 100%; height: 100%; }
.tx { font-family: "Liberation Mono", monospace; font-size: 6.500px; fill: #333; }
.tx-s { font-family: "Liberation Mono", monospace; font-size: 4px; fill: #555; }
.hint { padding: 9px 0 0 8px; font-size: 14px; line-height: 22px; white-space: nowrap; }
.hint b { color: #000; }
.hint-line { padding-left: 6px; }
.hint-dim { background: #dcebfb; }
.hint-mea { background: #cdeedd; }
```
